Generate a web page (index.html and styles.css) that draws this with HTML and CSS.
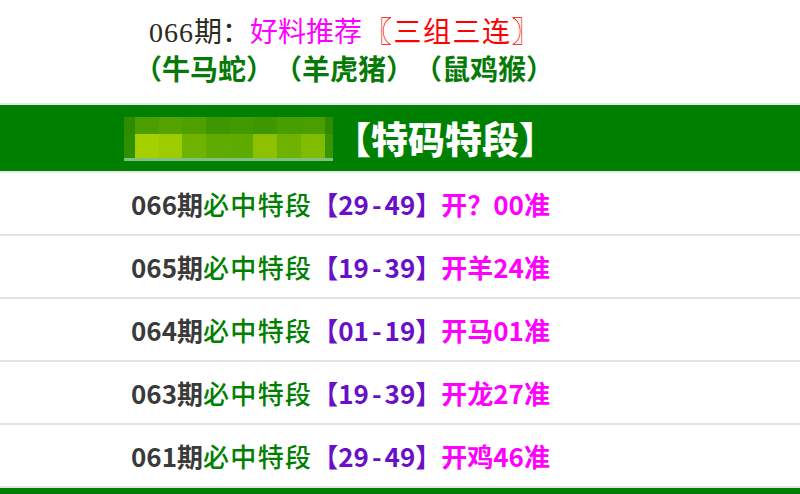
FILE: index.html
```html
<!DOCTYPE html>
<html lang="zh">
<head>
<meta charset="utf-8">
<link rel="stylesheet" href="styles.css">
</head>
<body>
<header class="top">
  <p class="line1"><span class="qi"><span class="num">066</span>期：</span><span class="pink">好料推荐</span><span class="red">〖三组三连〗</span></p>
  <p class="line2">（牛马蛇）（羊虎猪）（鼠鸡猴）</p>
</header>
<section class="bar">
  <div class="mosaic">
    <div class="mrow r1">
      <i class="c0" style="background:#2f8c00"></i><i class="c1" style="background:#4a9e00"></i><i class="c1" style="background:#55a300"></i><i class="c1" style="background:#4da000"></i><i class="c1" style="background:#3c9700"></i><i class="c1" style="background:#419a00"></i><i class="c1" style="background:#3d9800"></i><i class="c1" style="background:#489d00"></i><i class="c1" style="background:#4a9e00"></i><i class="c9" style="background:#2f8c00"></i>
    </div>
    <div class="mrow r2">
      <i class="c0" style="background:#2f9000"></i><i class="c1" style="background:#a6cf00"></i><i class="c1" style="background:#9ccb00"></i><i class="c1" style="background:#6fb300"></i><i class="c1" style="background:#5fab00"></i><i class="c1" style="background:#5eab00"></i><i class="c1" style="background:#8dc000"></i><i class="c1" style="background:#6db200"></i><i class="c1" style="background:#7fbb00"></i><i class="c9" style="background:#3a9600"></i>
    </div>
  </div>
  <h2 class="title">【特码特段】</h2>
</section>
<ul class="list">
  <li><span class="n">066期</span><span class="g">必中特段</span><span class="p">【29<span class="h">-</span>49】</span><span class="m">开？00准</span></li>
  <li><span class="n">065期</span><span class="g">必中特段</span><span class="p">【19<span class="h">-</span>39】</span><span class="m">开羊24准</span></li>
  <li><span class="n">064期</span><span class="g">必中特段</span><span class="p">【01<span class="h">-</span>19】</span><span class="m">开马01准</span></li>
  <li><span class="n">063期</span><span class="g">必中特段</span><span class="p">【19<span class="h">-</span>39】</span><span class="m">开龙27准</span></li>
  <li><span class="n">061期</span><span class="g">必中特段</span><span class="p">【29<span class="h">-</span>49】</span><span class="m">开鸡46准</span></li>
</ul>
<footer class="foot"></footer>
</body>
</html>
```
FILE: styles.css
```css
html, body {
  margin: 0;
  padding: 0;
  background: #fff;
}
body {
  width: 800px;
  height: 494px;
  overflow: hidden;
  text-spacing-trim: space-all;
}
.top {
  height: 103px;
  border-bottom: 2px solid #e6e6e6;
  box-sizing: content-box;
}
.top p {
  margin: 0;
}
.line1 {
  padding: 16px 0 0 149px;
  height: 34px;
  font-family: "Liberation Serif", "Noto Sans CJK SC", serif;
  font-size: 28px;
  line-height: 34px;
  color: #2b2b1a;
  white-space: nowrap;
}
.line1 .num { letter-spacing: 1px; }
.line1 .pink { color: #ff00ff; }
.line1 .red { color: #ff0000; letter-spacing: 1.5px; margin-left: 2px; }
.line2 {
  padding-left: 134px;
  font-family: "Noto Sans CJK SC", sans-serif;
  font-weight: 700;
  font-size: 28px;
  letter-spacing: 0;
  line-height: 36px;
  color: #067a06;
  white-space: nowrap;
}
.bar {
  height: 66px;
  background: #008000;
  border-bottom: 2px solid #e6e6e6;
  display: flex;
  align-items: center;
  padding-left: 124px;
  gap: 1px;
}
.mosaic {
  width: 209px;
  display: flex;
  flex-direction: column;
  border-bottom: 3px solid #7fc07f;
  margin-top: 2px;
}
.mrow {
  display: flex;
}
.mrow i {
  display: block;
}
.r1 { height: 17px; }
.r2 { height: 24px; }
.c0 { width: 11px; }
.c1 { width: 23.7px; }
.c9 { flex: 1; }
.title {
  margin: 0;
  font-family: "Noto Sans CJK SC", sans-serif;
  font-weight: 900;
  font-size: 37px;
  line-height: 44px;
  color: #fff;
  white-space: nowrap;
}
.list {
  list-style: none;
  margin: 0;
  padding: 0;
}
.list li {
  height: 61px;
  border-bottom: 2px solid #e2e2e2;
  padding-left: 131px;
  font-family: "Noto Sans CJK SC", sans-serif;
  font-weight: 700;
  font-size: 26px;
  line-height: 61px;
  white-space: nowrap;
}
.list .n { color: #3a3a3a; }
.list .g { color: #008000; letter-spacing: 1.3px; font-weight: 500; }
.list .p { color: #6a0fc8; }
.list .h { margin: 0 3px; }
.list .m { color: #ff00ff; }
.foot {
  height: 8px;
  background: #008000;
}
```
